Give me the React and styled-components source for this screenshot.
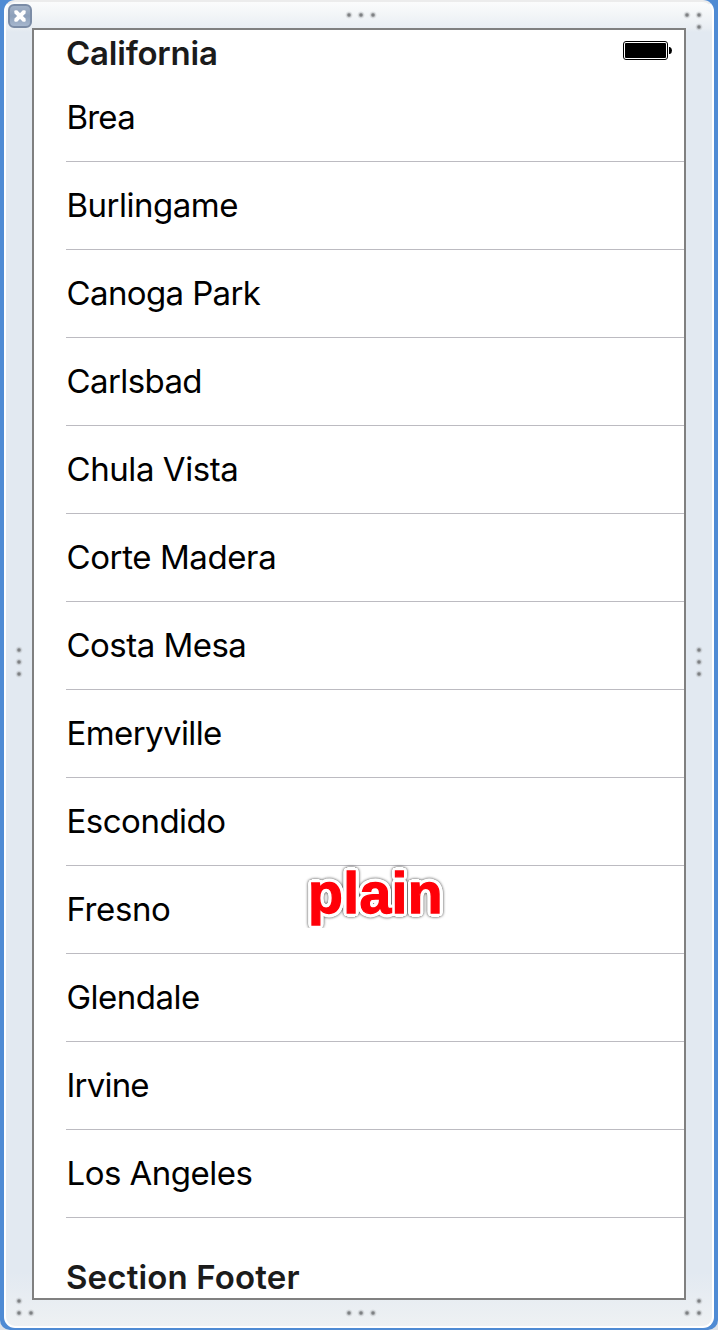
import React from "react";
import styled, { createGlobalStyle } from "styled-components";

const GlobalStyle = createGlobalStyle`
  body { margin: 0; background: #dfe3e8; }
  * { box-sizing: border-box; }
`;

const Selection = styled.div`
  width: 718px;
  height: 1330px;
  padding: 0 4px 2px;
  border-radius: 0 0 10px 10px;
  background: #4f8bd4;
`;

const Bezel = styled.div`
  position: relative;
  height: 1328px;
  padding: 26px 26px 26px;
  border: 2px solid #fff;
  border-top-color: #ececec;
  border-radius: 11px;
  background: linear-gradient(#fbfcfc 0, #e9eef3 26px, #e2e9f1 30px, #e2e9f1 1270px, #eef1f3 1324px);
`;

const Screen = styled.div`
  height: 1272px;
  border: 2px solid #808080;
  background: #fff;
  padding-left: 32px;
  overflow: hidden;
  font-family: Inter, "Liberation Sans", sans-serif;
  font-size: 33px;
  color: #000;
`;

const Header = styled.div`
  display: flex;
  justify-content: space-between;
  height: 44px;
  padding-right: 12px;
`;

const SectionTitle = styled.div`
  font-weight: 600;
  color: #1b1b1b;
  height: 44px;
  line-height: 46px;
  letter-spacing: ${(p) => p.$track}px;
  white-space: nowrap;
`;

const Row = styled.div`
  height: 88px;
  line-height: 87px;
  padding-left: 0.5px;
  border-bottom: 1px solid #bcbbc1;
  letter-spacing: ${(p) => p.$track}px;
  white-space: nowrap;
`;

const Footer = styled.div`
  padding-top: 36px;
`;

const Battery = styled.svg`
  margin-top: 11px;
`;

const Close = styled.svg`
  position: absolute;
  left: 2px;
  top: 2px;
`;

const Grip = styled.svg`
  position: absolute;
  left: ${(p) => p.$x - 6}px;
  top: ${(p) => p.$y - 2}px;
  overflow: visible;
`;

const outline = (radius, steps) =>
  Array.from({ length: steps }, (_, i) => {
    const a = (i / steps) * Math.PI * 2;
    return `${(Math.cos(a) * radius).toFixed(2)}px ${(Math.sin(a) * radius).toFixed(2)}px 0 #fff`;
  }).join(", ");

const Caption = styled.div`
  position: absolute;
  left: 296px;
  top: 856px;
  width: 150px;
  height: 70px;
  padding-left: 6px;
  overflow: hidden;
  font: bold 57px/71px "Liberation Sans", Arial, sans-serif;
  letter-spacing: 0.4px;
  color: #ff0008;
  -webkit-text-stroke: 1.3px #ff0008;
  text-shadow: ${outline(3.6, 24)}, ${outline(2, 8)};

  span {
    display: block;
    filter: drop-shadow(0 0.5px 1.8px rgba(0, 0, 0, 0.75));
  }
`;

const ROWS = [
  ["Brea", -0.8],
  ["Burlingame", -0.5],
  ["Canoga Park", -0.62],
  ["Carlsbad", -0.6],
  ["Chula Vista", -0.43],
  ["Corte Madera", -0.4],
  ["Costa Mesa", -0.52],
  ["Emeryville", -0.6],
  ["Escondido", -0.5],
  ["Fresno", -0.4],
  ["Glendale", -0.5],
  ["Irvine", -0.8],
  ["Los Angeles", -0.52],
];

const GRIPS = [
  { x: 349, y: 15, dots: [[0, 0], [12, 0], [24, 0]] },
  { x: 687, y: 15, dots: [[0, 0], [12, 0], [12, 12]] },
  { x: 19, y: 650, dots: [[0, 0], [0, 12], [0, 24]] },
  { x: 699, y: 650, dots: [[0, 0], [0, 12], [0, 24]] },
  { x: 19, y: 1301, dots: [[0, 0], [0, 12], [12, 12]] },
  { x: 349, y: 1313, dots: [[0, 0], [12, 0], [24, 0]] },
  { x: 687, y: 1301, dots: [[12, 0], [0, 12], [12, 12]] },
];

function Dots({ x, y, dots }) {
  return (
    <Grip $x={x} $y={y} width="1" height="1">
      <defs>
        <radialGradient id="dot">
          <stop offset="0" stopColor="#6c6e70" />
          <stop offset="0.35" stopColor="#85888b" stopOpacity="0.9" />
          <stop offset="0.6" stopColor="#a0a3a6" stopOpacity="0.4" />
          <stop offset="1" stopColor="#b0b4b8" stopOpacity="0" />
        </radialGradient>
      </defs>
      {dots.map(([dx, dy]) => (
        <circle key={`${dx}-${dy}`} cx={dx} cy={dy} r="4" fill="url(#dot)" />
      ))}
    </Grip>
  );
}

export default function App() {
  return (
    <>
      <GlobalStyle />
      <Selection>
        <Bezel>
          <Screen>
            <Header>
              <SectionTitle $track={-0.22}>California</SectionTitle>
              <Battery width="49" height="19" viewBox="0 0 49 19">
                <rect x="0.5" y="0.5" width="44" height="18" rx="2.5" fill="#fff" stroke="#000" />
                <rect x="2" y="2" width="41" height="15" rx="1" />
                <path d="M46 6h1q2 1 2 3.500t-2 3.500h-1z" />
              </Battery>
            </Header>
            {ROWS.map(([name, track]) => (
              <Row key={name} $track={track}>{name}</Row>
            ))}
            <Footer>
              <SectionTitle $track={0.15}>Section Footer</SectionTitle>
            </Footer>
          </Screen>
          {GRIPS.map((g) => (
            <Dots key={`${g.x}-${g.y}`} {...g} />
          ))}
          <Close width="24" height="24" viewBox="0 0 24 24">
            <defs>
              <linearGradient id="close" x2="0" y2="1">
                <stop offset="0" stopColor="#a5b4c9" />
                <stop offset="0.5" stopColor="#8c9fb9" />
                <stop offset="1" stopColor="#a9bad1" />
              </linearGradient>
            </defs>
            <rect x="1" y="1" width="22" height="22" rx="5" fill="url(#close)" stroke="#7b8ca6" strokeWidth="2" />
            <path d="M7.500 7.500l9 9M16.500 7.500l-9 9" stroke="#fff" strokeWidth="4" strokeLinecap="butt" />
            <path d="M7.500 7.500l9 9M16.500 7.500l-9 9" stroke="#fff" strokeWidth="2.500" strokeLinecap="round" />
          </Close>
          <Caption><span>plain</span></Caption>
        </Bezel>
      </Selection>
    </>
  );
}
